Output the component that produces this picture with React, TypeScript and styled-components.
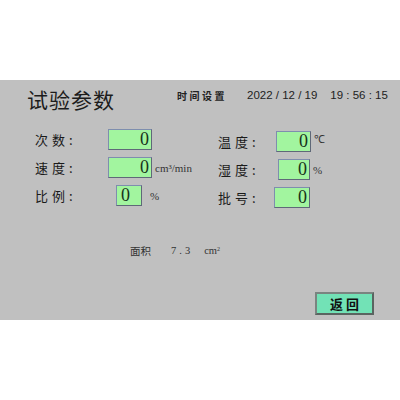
import * as React from "react"
import styled, { createGlobalStyle } from "styled-components"

const GlobalStyle = createGlobalStyle`
  html, body {
    margin: 0;
    padding: 0;
    background: #ffffff;
  }
  body {
    font-family: "Noto Sans CJK SC", "Liberation Sans", sans-serif;
  }
`

type Field = {
  label: string
  value: string
  unit?: string
  unitTop?: boolean
  width: number
  shift?: number
  align?: "left" | "right"
}

const leftFields: Field[] = [
  { label: "次数:", value: "0", width: 44 },
  { label: "速度:", value: "0", unit: "cm³/min", width: 44 },
  { label: "比例:", value: "0", unit: "%", width: 26, shift: 8, align: "left" },
]

const rightFields: Field[] = [
  { label: "温度:", value: "0", unit: "℃", unitTop: true, width: 35 },
  { label: "湿度:", value: "0", unit: "%", width: 32, shift: 2 },
  { label: "批号:", value: "0", width: 36, shift: -2 },
]

const App = () => {
  return (
    <>
      <GlobalStyle />
      <Page>
        <Panel>
          <Header>
            <Title>试验参数</Title>
            <Clock>
              <ClockLabel>时间设置</ClockLabel>
              <ClockValue>2022 / 12 / 19</ClockValue>
              <ClockValue>19 : 56 : 15</ClockValue>
            </Clock>
          </Header>

          <Form>
            <Column offsetTop={0} labelWidth={73}>
              {leftFields.map(f => (
                <FieldRow key={f.label} field={f} />
              ))}
            </Column>
            <Column offsetTop={2} labelWidth={58}>
              {rightFields.map(f => (
                <FieldRow key={f.label} field={f} />
              ))}
            </Column>
          </Form>

          <Area>
            <span>面积</span>
            <AreaValue>7.3</AreaValue>
            <span>
              cm<sup>2</sup>
            </span>
          </Area>

          <Footer>
            <BackButton>返回</BackButton>
          </Footer>
        </Panel>
      </Page>
    </>
  )
}

const FieldRow = ({ field }: { field: Field }) => (
  <Row>
    <Label>{field.label}</Label>
    <ValueBox
      boxWidth={field.width}
      shift={field.shift || 0}
      align={field.align || "right"}
    >
      {field.value}
    </ValueBox>
    {field.unit && (
      <Unit top={!!field.unitTop} wide={field.align === "left"}>
        {field.unit}
      </Unit>
    )}
  </Row>
)

const Page = styled.div`
  width: 400px;
  height: 400px;
  padding-top: 80px;
  box-sizing: border-box;
  background: #ffffff;
`

const Panel = styled.div`
  height: 240px;
  background: #c0c0c0;
  display: flex;
  flex-direction: column;
  padding-top: 6px;
  box-sizing: border-box;
`

const Header = styled.div`
  display: flex;
  align-items: flex-start;
  height: 26px;
  padding-left: 27px;
`

const Title = styled.div`
  flex-shrink: 0;
  font-size: 21px;
  line-height: 26px;
  letter-spacing: 1px;
  color: #1c1c1c;
  width: 150px;
`

const Clock = styled.div`
  display: flex;
  align-items: center;
  gap: 13px;
  flex-shrink: 0;
  padding-top: 2px;
  height: 14px;
`

const ClockLabel = styled.span`
  font-size: 10px;
  font-weight: bold;
  letter-spacing: 2.5px;
  color: #222;
  width: 57px;
`

const ClockValue = styled.span`
  font-family: "Liberation Sans", Arial, sans-serif;
  font-size: 11.5px;
  color: #222;
  white-space: pre;
`

const Form = styled.div`
  display: grid;
  grid-template-columns: 183px 1fr;
  margin-top: 17px;
  padding-left: 35px;
`

const Column = styled.div<{ offsetTop: number; labelWidth: number }>`
  display: flex;
  flex-direction: column;
  gap: 7px;
  padding-top: ${({ offsetTop }) => offsetTop}px;

  & > div > span:first-child {
    width: ${({ labelWidth }) => labelWidth}px;
  }
`

const Row = styled.div`
  display: flex;
  align-items: center;
  height: 21px;
`

const Label = styled.span`
  flex-shrink: 0;
  font-size: 13px;
  letter-spacing: 4px;
  color: #1a1a1a;
`

const ValueBox = styled.div<{ boxWidth: number; shift: number; align: string }>`
  width: ${({ boxWidth }) => boxWidth}px;
  height: 21px;
  margin-left: ${({ shift }) => shift}px;
  box-sizing: border-box;
  background: #a2f59f;
  border: 1px solid #7e8eae;
  border-right-color: #5f6878;
  border-bottom-color: #5f6878;
  font-family: "Liberation Serif", "Times New Roman", serif;
  font-size: 18px;
  line-height: 19px;
  color: #16331a;
  text-align: ${({ align }) => align};
  padding: 0 2px 0 4px;
`

const Unit = styled.span<{ top: boolean; wide: boolean }>`
  font-family: "Liberation Serif", "Times New Roman", serif;
  font-size: 11px;
  color: #333;
  margin-left: ${({ wide }) => (wide ? 8 : 3)}px;
  align-self: ${({ top }) => (top ? "flex-start" : "center")};
`

const Area = styled.div`
  display: flex;
  align-items: center;
  margin-top: 35px;
  padding-left: 130px;
  height: 14px;
  font-size: 10.5px;
  color: #333;

  sup {
    font-size: 6px;
    vertical-align: top;
    line-height: 8px;
  }

  span {
    font-family: "Liberation Serif", "Noto Sans CJK SC", serif;
  }
`

const AreaValue = styled.span`
  margin: 0 11px 0 20px;
  letter-spacing: 3px;
`

const Footer = styled.div`
  display: flex;
  justify-content: flex-end;
  margin-top: 35px;
  padding-right: 26px;
`

const BackButton = styled.button`
  width: 59px;
  height: 23px;
  box-sizing: border-box;
  background: #72e2b6;
  border: 2px solid #5a6460;
  border-top-color: #7a8480;
  border-left-color: #7a8480;
  font-family: "Noto Sans CJK SC", sans-serif;
  font-size: 13px;
  font-weight: bold;
  letter-spacing: 3px;
  color: #111;
  padding: 0 0 0 3px;
  cursor: pointer;
`

export default App
